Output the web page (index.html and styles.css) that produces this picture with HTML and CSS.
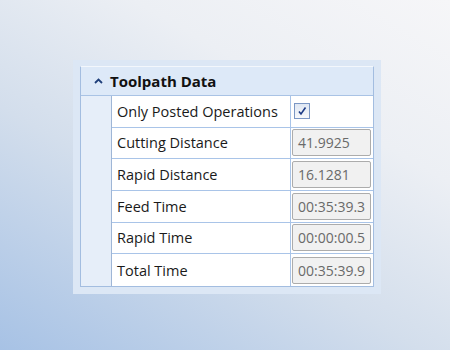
FILE: index.html
```html
<!DOCTYPE html>
<html lang="en">
<head>
  <meta charset="UTF-8" />
  <meta name="viewport" content="width=device-width, initial-scale=1.0" />
  <title>Toolpath Data</title>
  <link rel="stylesheet" href="styles.css">
</head>
<body>
  <div class="frame">
    <div class="panel">
      <div class="header">
        <svg class="chevron" width="9" height="6" viewBox="0 0 9 6">
          <path d="M1 5 L4.5 1.5 L8 5" fill="none" stroke="#1f3f7a" stroke-width="1.8"/>
        </svg>
        <span class="title">Toolpath Data</span>
      </div>
      <div class="grid">
        <div class="label">Only Posted Operations</div>
        <div class="value">
          <span class="check">
            <svg width="10" height="10" viewBox="0 0 10 10">
              <path d="M2 5.5 L4 8 L8.5 1.5" fill="none" stroke="#1d3b86" stroke-width="1.6"/>
            </svg>
          </span>
        </div>
        <div class="label">Cutting Distance</div>
        <div class="value"><span class="box">41.9925</span></div>
        <div class="label">Rapid Distance</div>
        <div class="value"><span class="box">16.1281</span></div>
        <div class="label">Feed Time</div>
        <div class="value"><span class="box">00:35:39.3</span></div>
        <div class="label">Rapid Time</div>
        <div class="value"><span class="box">00:00:00.5</span></div>
        <div class="label last">Total Time</div>
        <div class="value last"><span class="box">00:35:39.9</span></div>
      </div>
    </div>
  </div>
</body>
</html>
```

FILE: styles.css
```css
body {
  margin: 0;
  height: 350px;
  font-family: 'Open Sans', 'Noto Sans', sans-serif;
  background: linear-gradient(30deg, #a7c2e5 0%, #d3deec 40%, #eceff4 70%, #f6f6f8 100%);
  overflow: hidden;
}
.frame {
  margin: 60px 0 0 73px;
  width: 308px;
  height: 234px;
  box-sizing: border-box;
  padding: 6px 7px 0 7px;
  background: #dce7f5;
}
.panel {
  border: 1px solid #a3bde0;
  border-top-color: #f3f7fc;
  background: #e6eef9;
}
.header {
  height: 28px;
  display: flex;
  align-items: center;
  gap: 7px;
  padding-left: 13px;
  background: #dde9f8;
  border-bottom: 1px solid #a9c3e5;
}
.chevron {
  margin-top: -1px;
}
.title {
  font-weight: bold;
  font-size: 15px;
  color: #111;
}
.grid {
  margin-left: 30px;
  border-left: 1px solid #9fb6d6;
  background: #fff;
  display: grid;
  grid-template-columns: 179px 1fr;
  grid-auto-rows: 31.67px;
}
.label,
.value {
  display: flex;
  align-items: center;
  border-bottom: 1px solid #a9c4e8;
}
.label {
  padding-left: 5px;
  font-size: 14.5px;
  color: #1a1a1a;
  border-right: 1px solid #a9c4e8;
}
.value {
  padding-left: 1px;
}
.last {
  border-bottom: none;
}
.box {
  width: 79px;
  height: 27px;
  box-sizing: border-box;
  display: flex;
  align-items: center;
  padding-left: 5px;
  background: #f1f1f1;
  border: 1px solid #acacac;
  border-radius: 2px;
  font-size: 14px;
  color: #6a6a6a;
}
.check {
  width: 16px;
  height: 16px;
  box-sizing: border-box;
  margin: -1px 0 0 2px;
  display: flex;
  align-items: center;
  justify-content: center;
  border: 1px solid #7b97c4;
  background: linear-gradient(#dfe7f3, #f6f8fb);
}
```
